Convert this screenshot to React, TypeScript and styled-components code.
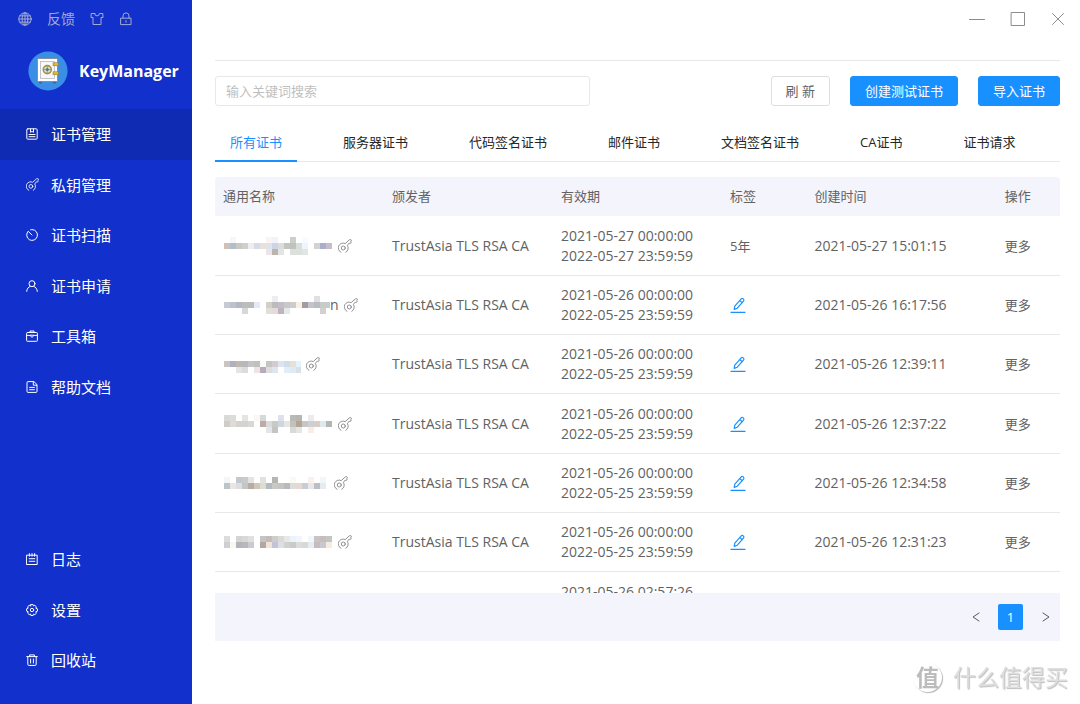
import React from 'react';
import styled, { createGlobalStyle } from 'styled-components';

const GlobalStyle = createGlobalStyle`
  *, *::before, *::after { box-sizing: border-box; }
  body { margin: 0; background: #fff; }
  body, button, input {
    font-family: "Open Sans", "Noto Sans CJK SC", sans-serif;
    font-size: 13px;
    line-height: 20px;
    color: #626262;
  }
  button { padding: 0; border: 0; background: none; cursor: pointer; }
  a { color: inherit; text-decoration: none; }
  svg { display: block; flex: none; }
`;

const blue = '#1890ff';
const panel = '#f3f4fc';
const line = '#e8e8e8';

const Window = styled.div`
  display: flex;
  height: 100vh;
  min-height: 560px;
`;

const Sidebar = styled.aside`
  display: flex;
  flex-direction: column;
  flex: none;
  width: 192px;
  padding-bottom: 18px;
  background: #1230cb;
  color: #fff;
`;

const QuickBar = styled.div`
  display: flex;
  align-items: center;
  height: 38px;
  padding-left: 18px;
  gap: 15px;
  color: #a3abd3;
`;

const QuickButton = styled.button`
  display: flex;
  align-items: center;
  color: inherit;
  font-size: 14px;
`;

const Brand = styled.div`
  display: flex;
  align-items: center;
  gap: 11px;
  height: 71px;
  padding: 0 0 6px 28px;
  font-size: 16px;
  font-weight: 700;
`;

const NavList = styled.nav`
  display: flex;
  flex-direction: column;
`;

const BottomNav = styled(NavList)`
  margin-top: auto;
`;

const NavLink = styled.a<{ $active?: boolean }>`
  display: flex;
  align-items: center;
  gap: 12px;
  height: 51px;
  padding: 0 0 1px 26px;
  font-size: 15px;
  background: ${(p) => (p.$active ? '#102bb3' : 'transparent')};
  &:nth-child(even) { height: 50px; }
`;

const NavIcon = styled.span`
  width: 13px;
`;

const Main = styled.main`
  display: flex;
  flex-direction: column;
  flex: 1;
  min-width: 0;
  padding: 0 20px 63px 23px;
`;

const TitleBar = styled.header`
  display: flex;
  justify-content: flex-end;
  flex: none;
  height: 61px;
  margin-right: -5px;
  padding-top: 11px;
`;

const WindowControls = styled.div`
  display: flex;
  align-items: flex-start;
  gap: 25px;
  color: #8c8c8c;
`;

const WindowButton = styled.button`
  color: inherit;
`;

const Divider = styled.hr`
  flex: none;
  width: 100%;
  height: 1px;
  margin: -1px 0 15px;
  border: 0;
  background: ${line};
`;

const Toolbar = styled.div`
  display: flex;
  flex: none;
  gap: 20px;
`;

const Search = styled.input`
  width: 375px;
  min-width: 0;
  height: 30px;
  margin-right: auto;
  padding: 0 10px;
  border: 1px solid ${line};
  border-radius: 3px;
  outline: none;
  &::placeholder { color: #bfbfbf; opacity: 1; }
`;

const Button = styled.button<{ $primary?: boolean }>`
  height: 30px;
  padding: 0 14px;
  border: 1px solid ${(p) => (p.$primary ? blue : '#dedede')};
  border-radius: 3px;
  background: ${(p) => (p.$primary ? blue : '#fff')};
  color: ${(p) => (p.$primary ? '#fff' : '#626262')};
  white-space: nowrap;
`;

const Tabs = styled.div`
  display: flex;
  flex: none;
  gap: 31px;
  height: 40px;
  margin: 16px 0 15px;
  box-shadow: inset 0 -1px 0 ${line};
`;

const Tab = styled.button<{ $active?: boolean }>`
  padding: 0 15px;
  white-space: nowrap;
  color: ${(p) => (p.$active ? blue : '#262626')};
  box-shadow: ${(p) => (p.$active ? `inset 0 -2px 0 ${blue}` : 'none')};
`;

const TableArea = styled.div`
  flex: 1 1 0;
  min-height: 0;
  overflow-y: auto;
  scrollbar-width: none;
`;

const Table = styled.table`
  width: 100%;
  table-layout: fixed;
  border-collapse: separate;
  border-spacing: 0;
`;

const HeadCell = styled.th<{ $width: string }>`
  position: sticky;
  top: 0;
  width: ${(p) => p.$width};
  height: 39px;
  padding: 0 0 2px 8px;
  background: ${panel};
  font-weight: 400;
  text-align: left;
  &:first-child { border-top-left-radius: 4px; }
  &:last-child { border-top-right-radius: 4px; }
`;

const Row = styled.tr`
  height: 59px;
  &:nth-child(3n + 1) { height: 60px; }
`;

const Cell = styled.td`
  padding: 0 0 0 8px;
  border-bottom: 1px solid ${line};
  font-size: 14px;
  white-space: nowrap;
`;

const SmallText = styled.span`
  font-size: 13px;
`;

const NameBox = styled.div`
  display: flex;
  align-items: center;
  gap: 5px;
`;

const MaskedName = styled.span`
  display: flex;
  align-items: center;
`;

const KeyMark = styled.span`
  color: #858585;
`;

const IconButton = styled.button`
  display: block;
  color: ${blue};
`;

const MoreLink = styled.a`
  font-size: 13px;
`;

const Pager = styled.nav`
  display: flex;
  align-items: center;
  justify-content: flex-end;
  flex: none;
  gap: 10px;
  height: 48px;
  padding-right: 2px;
  background: ${panel};
`;

const PageButton = styled.button<{ $current?: boolean }>`
  display: flex;
  align-items: center;
  justify-content: center;
  width: 25px;
  height: 26px;
  border-radius: 2px;
  background: ${(p) => (p.$current ? blue : 'transparent')};
  color: ${(p) => (p.$current ? '#fff' : '#595959')};
`;

const Watermark = styled.div`
  position: fixed;
  right: 12px;
  bottom: 11px;
  display: flex;
  align-items: center;
  gap: 11px;
  color: #dedede;
  font-size: 23px;
  line-height: 32px;
  text-shadow: 1px 1px 1px #bdbdbd;
  pointer-events: none;
`;

const WatermarkBadge = styled.span`
  display: flex;
  align-items: center;
  justify-content: center;
  width: 29px;
  height: 29px;
  border-radius: 50%;
  background: #fff;
  box-shadow: 1px 1px 1px #b4b4b4;
  color: #bcbcbc;
  font-size: 23px;
  font-weight: 700;
  text-shadow: none;
`;

type IconProps = { size?: number; children: React.ReactNode };

function Icon({ size = 12, children }: IconProps) {
  return (
    <svg
      width={size}
      height={size}
      viewBox={`0 0 ${size} ${size}`}
      fill="none"
      stroke="currentColor"
      strokeLinecap="round"
      strokeLinejoin="round"
      aria-hidden="true"
    >
      {children}
    </svg>
  );
}

const KeyIcon = ({ size = 14 }: { size?: number }) => (
  <svg width={size} height={size} viewBox="0 0 14 14" fill="none" stroke="currentColor" strokeWidth=".9" strokeLinecap="round" strokeLinejoin="round" aria-hidden="true">
    <path d="M3 13.3A4.7 4.7 0 1 1 7.2 4.6L11.3.9Q12.6 0 13.4 1.1L12.9 2.6 13.1 3.8 11.8 4.5 11.1 4.1 9.4 6.5A4.7 4.7 0 0 1 7.8 13.3" />
    <circle cx="5.3" cy="9" r="2" />
  </svg>
);

const GlobeIcon = () => (
  <Icon size={14}>
    <circle cx="7" cy="7" r="6.2" />
    <ellipse cx="7" cy="7" rx="2.9" ry="6.2" />
    <path d="M7 .8v12.4M.8 7h12.4M1.7 3.9h10.6M1.7 10.1h10.6" />
  </Icon>
);

const ShirtIcon = () => (
  <Icon size={14}>
    <path d="M4.6 1.5H1.2L1 5.5h2v7h8v-7h2l-.2-4H9.4a2.4 2.4 0 0 1-4.8 0z" />
  </Icon>
);

const LockIcon = () => (
  <Icon size={14}>
    <path d="M2 6.2h10v6.4H2zM4 6V3.9a3 3 0 0 1 6 0V6M7 8.6v1.6" />
  </Icon>
);

const CertIcon = () => (
  <Icon>
    <rect x=".8" y=".8" width="10.4" height="10.4" rx="1" />
    <path d="M4.5 1v3.3L6 3.4l1.5.9V1M3 6.5h6M3 8.7h6" />
  </Icon>
);

const ScanIcon = () => (
  <Icon>
    <path d="M2.2 2.2A5.4 5.4 0 1 0 6 .6a5.2 5.2 0 0 0-1.4.2M2.6 2.7 6 6" />
  </Icon>
);

const UserIcon = () => (
  <Icon>
    <circle cx="6" cy="3.7" r="3" />
    <path d="M.7 11.4C.9 8.6 2.4 7 4.2 6.4M11.3 11.4C11.1 8.6 9.6 7 7.8 6.4" />
  </Icon>
);

const ToolboxIcon = () => (
  <Icon>
    <rect x=".6" y="2.5" width="10.8" height="8.8" rx=".8" />
    <path d="M4 2.4V1h4v1.4M.8 5.4h3.6M7.6 5.4h3.6M4.6 5.2h2.8v1L6 7.3 4.6 6.2z" />
  </Icon>
);

const DocIcon = () => (
  <Icon>
    <path d="M7.5.6H2a1 1 0 0 0-1 1v8.8a1 1 0 0 0 1 1h8a1 1 0 0 0 1-1V4zM7.3.9v3.3h3.4M3.6 6.4h4.8M3.6 8.7h4.8" />
  </Icon>
);

const LogIcon = () => (
  <Icon>
    <path d="M.8 2.2h10.4v9.3H.8zM3.4.6v2.6M6 .6v2.6M8.6.6v2.6M3.2 5.7h5.6M3.2 8.3h5.6" />
  </Icon>
);

const GearIcon = () => (
  <Icon>
    <path d="M4.9.6h2.2l.4 1.3 1.3-.6 1.6 1.5-.6 1.4 1.6.6v2.4l-1.6.6.6 1.4-1.6 1.5-1.3-.6-.4 1.4H4.9L4.5 10l-1.3.6-1.6-1.5.6-1.4L.6 7.1V4.8l1.6-.6-.6-1.4 1.6-1.5 1.3.6z" />
    <circle cx="6" cy="6" r="1.7" />
  </Icon>
);

const TrashIcon = () => (
  <Icon>
    <path d="M.7 2.6h10.6M3.6 2.4V.9h4.8v1.5M1.8 2.8v7.6a1 1 0 0 0 1 1h6.4a1 1 0 0 0 1-1V2.8M4.6 5v4M7.4 5v4" />
  </Icon>
);

const PenIcon = () => (
  <Icon size={16}>
    <path d="M1 15.3h14" strokeWidth="1.3" />
    <path d="M4.2 12.4 4.8 9.2 11 2.1a1.6 1.6 0 0 1 2.5 2.1L7.3 11.2zM9.8 3.6l2.5 2.1" strokeWidth="1.2" />
  </Icon>
);

const SafeLogo = () => (
  <svg width="40" height="40" viewBox="0 0 40 40" aria-hidden="true">
    <circle cx="20" cy="20" r="19.6" fill="#3b8ee5" />
    <path d="M10.5 30h4l-1 2.5h-2zM24.5 30h4l-1 2.5h-2z" fill="#55606e" />
    <rect x="9.5" y="7.5" width="20" height="23" rx="1" fill="#fff" stroke="#7b8490" strokeWidth=".8" />
    <rect x="12.5" y="10.5" width="14" height="17" fill="#f8f8f8" stroke="#b4b9c0" strokeWidth=".8" />
    <rect x="25" y="11.8" width="5.4" height="3" fill="#e2b72f" stroke="#8a722a" strokeWidth=".5" />
    <rect x="25" y="20.8" width="5.4" height="3" fill="#e2b72f" stroke="#8a722a" strokeWidth=".5" />
    <circle cx="19.3" cy="18.6" r="4" fill="#d9dde0" stroke="#a8913c" strokeWidth="1.6" />
    <path d="M19.3 15.4v6.4M16.1 18.6h6.4" stroke="#7d8884" strokeWidth=".8" />
    <circle cx="19.3" cy="18.6" r="1.5" fill="#3f7f88" />
  </svg>
);

type Mosaic = { width: number; rows: string[]; tail?: string };

/* Each row lists one colour per 6px block; "-" leaves a block empty. */
const Mask = ({ mask }: { mask: Mosaic }) => (
  <MaskedName>
    <svg width={mask.width} height={mask.rows.length * 6} role="img" aria-label="已隐藏" shapeRendering="crispEdges">
      {mask.rows.map((cells, r) =>
        cells.split(' ').map((c, i) =>
          c === '-' ? null : <rect key={`${r}-${i}`} x={1 + i * 6} y={r * 6} width="6" height="6" fill={`#${c}`} />
        )
      )}
    </svg>
    {mask.tail}
  </MaskedName>
);

const certificates: { mask: Mosaic; from: string; to: string; tag?: string; created: string }[] = [
  {
    mask: {
      width: 110,
      rows: [
        '- f5f8fb - - - - - fbf4f1 f1f3f8 - - cccec9 - f8fbff - - - -',
        'cfc0b8 b3bfc8 c8c8c4 d0cfce eeeeee d5dbe8 eae0da dfe3ee cdd5e4 dcdcdc c2c5c0 bfc2bd d8dedb eef6fd - d3d3d3 a9afc8 c6bec8',
        '- - - - - - - e8e6e8 bdb4b0 e2e5e3 - dde1de dde1de e2e6e3 - - - -',
      ],
    },
    from: '2021-05-27 00:00:00', to: '2022-05-27 23:59:59', tag: '5年', created: '2021-05-27 15:01:15',
  },
  {
    mask: {
      width: 107,
      rows: [
        '- - - - - - - - eeeef2 - - - - - - e0e0e0 - -',
        'c6c9d6 bcc1cc b4b8c2 bcbcbc b8bcba e3e9f6 - d0d0c8 bcbcbc c4bcc6 c8c8c8 cccccc faf0e2 a09ca2 c4c4c8 b8bcc4 c8ccc8 c4ccd2',
        '- - - d8d8d8 - - - e0e0da e4dcda beb4c0 e8e8e8 - - - - - d4d0d0 -',
      ],
      tail: 'n',
    },
    from: '2021-05-26 00:00:00', to: '2022-05-25 23:59:59', created: '2021-05-26 16:17:56',
  },
  {
    mask: {
      width: 78,
      rows: [
        '-',
        'cac4c0 aeb0c0 c0b6b2 b8b8ba c4c4c6 c0c0bc fafafa c8c4c4 d0ccd0 dce4ee d2dcea e2e2da e6f2fc',
        '- - e4e4e4 dcdcdc - eee4e6 b4acb6 e0dcde dfe5ee - e4ecf6 e0eaf4 d8e0e8',
      ],
    },
    from: '2021-05-26 00:00:00', to: '2022-05-25 23:59:59', created: '2021-05-26 12:39:11',
  },
  {
    mask: {
      width: 110,
      rows: [
        'd8dad6 dcdcd8 - e4e4e4 - fcf6f4 d6d8da - - dde1ec - b8bab6 b8b6b2 - ececec - - -',
        'd0ccca dedcd4 d4d4ce d2d4d4 d8d8d4 - beaaa6 dcdad8 c8cac8 cfd6e0 e4e8e4 c4c0bc b4a490 c4c6c8 ccd0d4 d8ccc8 dceaec b4b6b6',
        '- - - - - - - e2e6ec c4c4c6 - - d8dad6 e4e6e4 - f8ece4 - - -',
      ],
    },
    from: '2021-05-26 00:00:00', to: '2022-05-25 23:59:59', created: '2021-05-26 12:37:22',
  },
  {
    mask: {
      width: 106,
      rows: [
        'f2f6f6 - c2c8d2 cacaca e4e4e2 - e0e2e0 - b4b6b0 - - fafaf4 - - fbf0ea - f2f6f6',
        'bcc4c6 ece4e2 dedee0 c4c6c4 b8aca4 ccc8be dedcce b2bcc0 c8c8c8 c4c4c2 b8babc dcdcdc e8d8d0 c8ccd6 e8e8ec bcc0c4 e4ecee',
      ],
    },
    from: '2021-05-26 00:00:00', to: '2022-05-25 23:59:59', created: '2021-05-26 12:34:58',
  },
  {
    mask: {
      width: 110,
      rows: [
        'dcdcdc - d4d4d2 d8d8d6 e0e0e0 - c4c4c4 c4bcb8 d0ccca dcdad8 e8e8e8 eaf4fc f0f6fc - f4f6fa c8c4c4 c8bcbe c4c6c6',
        'ccd0d0 f8f8f0 b4b2bc b8b8bc c8ccd0 - b4a6a4 f0e4d6 c0c4d6 dce0e6 d0d0ce c8ccc8 dcdcda d8d8d8 e6ecf2 c4bcbe c8c8d0 f4ecdc',
      ],
    },
    from: '2021-05-26 00:00:00', to: '2022-05-25 23:59:59', created: '2021-05-26 12:31:23',
  },
  {
    mask: { width: 110, rows: ['c8c8c8 d4d4d4 c0c4cc dcdcdc'] },
    from: '2021-05-26 02:57:26', to: '2022-05-26 02:57:26', created: '2021-05-26 10:57:28',
  },
];

const columns = [
  ['通用名称', '20%'],
  ['颁发者', '20%'],
  ['有效期', '20%'],
  ['标签', '10%'],
  ['创建时间', '22.5%'],
  ['操作', '7.5%'],
];

const tabs = ['所有证书', '服务器证书', '代码签名证书', '邮件证书', '文档签名证书', 'CA证书', '证书请求'];

const mainNav = [
  { label: '证书管理', icon: <CertIcon /> },
  { label: '私钥管理', icon: <KeyIcon size={13} /> },
  { label: '证书扫描', icon: <ScanIcon /> },
  { label: '证书申请', icon: <UserIcon /> },
  { label: '工具箱', icon: <ToolboxIcon /> },
  { label: '帮助文档', icon: <DocIcon /> },
];

const bottomNav = [
  { label: '日志', icon: <LogIcon /> },
  { label: '设置', icon: <GearIcon /> },
  { label: '回收站', icon: <TrashIcon /> },
];

export default function App() {
  return (
    <>
      <GlobalStyle />
      <Window>
        <Sidebar>
          <QuickBar>
            <QuickButton aria-label="语言"><GlobeIcon /></QuickButton>
            <QuickButton>反馈</QuickButton>
            <QuickButton aria-label="皮肤"><ShirtIcon /></QuickButton>
            <QuickButton aria-label="锁定"><LockIcon /></QuickButton>
          </QuickBar>
          <Brand>
            <SafeLogo />
            KeyManager
          </Brand>
          <NavList aria-label="主导航">
            {mainNav.map((item, i) => (
              <NavLink key={item.label} href="#" $active={i === 0}>
                <NavIcon>{item.icon}</NavIcon>
                {item.label}
              </NavLink>
            ))}
          </NavList>
          <BottomNav aria-label="系统">
            {bottomNav.map((item) => (
              <NavLink key={item.label} href="#">
                <NavIcon>{item.icon}</NavIcon>
                {item.label}
              </NavLink>
            ))}
          </BottomNav>
        </Sidebar>

        <Main>
          <TitleBar>
            <WindowControls>
              <WindowButton aria-label="最小化">
                <Icon size={16}><path d="M.5 8.5h15" /></Icon>
              </WindowButton>
              <WindowButton aria-label="最大化">
                <Icon size={16}><rect x="1.5" y="1.5" width="13" height="13" /></Icon>
              </WindowButton>
              <WindowButton aria-label="关闭">
                <Icon size={14}><path d="m1.5 2.5 11 11M12.5 2.5l-11 11" /></Icon>
              </WindowButton>
            </WindowControls>
          </TitleBar>
          <Divider />

          <Toolbar>
            <Search type="text" aria-label="搜索" placeholder="输入关键词搜索" />
            <Button>刷 新</Button>
            <Button $primary>创建测试证书</Button>
            <Button $primary>导入证书</Button>
          </Toolbar>

          <Tabs role="tablist">
            {tabs.map((label, i) => (
              <Tab key={label} role="tab" aria-selected={i === 0} $active={i === 0}>{label}</Tab>
            ))}
          </Tabs>

          <TableArea>
            <Table>
              <thead>
                <tr>
                  {columns.map(([label, width]) => (
                    <HeadCell key={label} $width={width}>{label}</HeadCell>
                  ))}
                </tr>
              </thead>
              <tbody>
                {certificates.map((cert) => (
                  <Row key={cert.created}>
                    <Cell>
                      <NameBox>
                        <Mask mask={cert.mask} />
                        <KeyMark><KeyIcon /></KeyMark>
                      </NameBox>
                    </Cell>
                    <Cell>TrustAsia TLS RSA CA</Cell>
                    <Cell>
                      {cert.from}
                      <br />
                      {cert.to}
                    </Cell>
                    <Cell>
                      {cert.tag ? (
                        <SmallText>{cert.tag}</SmallText>
                      ) : (
                        <IconButton aria-label="编辑标签"><PenIcon /></IconButton>
                      )}
                    </Cell>
                    <Cell>{cert.created}</Cell>
                    <Cell><MoreLink href="#">更多</MoreLink></Cell>
                  </Row>
                ))}
              </tbody>
            </Table>
          </TableArea>

          <Pager aria-label="分页">
            <PageButton aria-label="上一页">
              <Icon size={10}><path d="M8 1 2 5l6 4" /></Icon>
            </PageButton>
            <PageButton $current>1</PageButton>
            <PageButton aria-label="下一页">
              <Icon size={10}><path d="m2 1 6 4-6 4" /></Icon>
            </PageButton>
          </Pager>
        </Main>
      </Window>
      <Watermark>
        <WatermarkBadge>值</WatermarkBadge>
        什么值得买
      </Watermark>
    </>
  );
}
